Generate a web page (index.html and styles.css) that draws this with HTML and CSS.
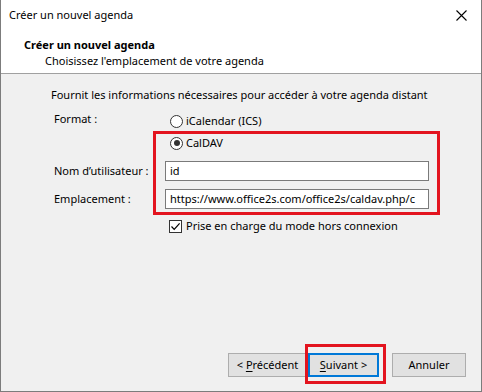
FILE: index.html
```html
<!DOCTYPE html>
<html lang="fr">
<head>
<meta charset="utf-8">
<title>Créer un nouvel agenda</title>
<link rel="stylesheet" href="styles.css">
</head>
<body>
<div class="window">
  <div class="titlebar">
    <span class="title">Créer un nouvel agenda</span>
    <svg class="close" width="11" height="11" viewBox="0 0 11 11"><path d="M0.5 0.5 L10.5 10.5 M10.5 0.5 L0.5 10.5" stroke="#000" stroke-width="1.1" fill="none"/></svg>
  </div>
  <div class="header">
    <div class="h-title">Créer un nouvel agenda</div>
    <div class="h-sub">Choisissez l'emplacement de votre agenda</div>
  </div>
  <div class="body">
    <div class="intro">Fournit les informations nécessaires pour accéder à votre agenda distant</div>
    <div class="form">
      <div class="highlight"></div>
      <div class="label l-format">Format :</div>
      <div class="choice"><span class="radio"></span><span>iCalendar (ICS)</span></div>
      <div class="label"></div>
      <div class="choice"><span class="radio checked"></span><span>CalDAV</span></div>
      <div class="label l-field">Nom d’utilisateur :</div>
      <div class="field"><div class="input">id</div></div>
      <div class="label l-field">Emplacement :</div>
      <div class="field"><div class="input">https://www.office2s.com/office2s/caldav.php/c</div></div>
      <div class="label"></div>
      <div class="check-row"><span class="checkbox"><svg width="11" height="11" viewBox="0 0 11 11"><path d="M1.5 5.5 L4.2 8.3 L9.6 2.4" stroke="#000" stroke-width="1.2" fill="none"/></svg></span><span>Prise en charge du mode hors connexion</span></div>
    </div>
    <div class="spacer"></div>
    <div class="buttons">
      <div class="btn prev"><span>&lt; <u>P</u>récédent</span></div>
      <div class="btn next default"><span><u>S</u>uivant &gt;</span><div class="btn-highlight"></div></div>
      <div class="btn cancel"><span>Annuler</span></div>
    </div>
  </div>
</div>
</body>
</html>
```

FILE: styles.css
```css
* { box-sizing: border-box; }
html, body { margin: 0; padding: 0; }
body {
  font-family: "Noto Sans", "Open Sans", sans-serif;
  font-size: 11px;
  color: #000;
  background: #f0f0f0;
}
.window {
  width: 482px;
  height: 392px;
  display: flex;
  flex-direction: column;
  border-left: 1px solid #7c7c7c;
  border-right: 1px solid #7c7c7c;
  border-bottom: 1px solid #7c7c7c;
  background: #f0f0f0;
}
.titlebar {
  height: 30px;
  background: #fff;
  display: flex;
  align-items: center;
  justify-content: space-between;
  padding: 0 14px 0 8px;
}
.title { line-height: 16px; }
.close { display: block; }
.header {
  height: 44px;
  background: #fff;
  border-bottom: 1px solid #a0a0a0;
  padding: 7px 0 0 23px;
}
.h-title { font-weight: bold; line-height: 16px; }
.h-sub { line-height: 16px; padding-left: 21px; }
.body {
  flex: 1;
  display: flex;
  flex-direction: column;
  padding: 13px 15px 14px 50px;
}
.intro { line-height: 16px; }
.form {
  position: relative;
  margin-top: 7px;
  margin-left: 3px;
  display: grid;
  grid-template-columns: 111px 264px;
  grid-template-rows: 22px 22px 28px 28px 28px;
}
.label { line-height: 16px; white-space: nowrap; }
.l-format { padding-top: 1px; }
.l-field { padding-top: 9px; }
.choice {
  display: flex;
  align-items: center;
  gap: 3px;
  padding-left: 5px;
  line-height: 16px;
}
.radio {
  width: 13px;
  height: 13px;
  border: 1px solid #333;
  border-radius: 50%;
  background: #fff;
  position: relative;
  flex: none;
}
.radio.checked::after {
  content: "";
  position: absolute;
  left: 2.5px;
  top: 2.5px;
  width: 6px;
  height: 6px;
  border-radius: 50%;
  background: #333;
}
.field { padding-top: 7px; }
.input {
  height: 20px;
  border: 1px solid #7a7a7a;
  background: #fff;
  line-height: 18px;
  padding-left: 4px;
  white-space: nowrap;
  overflow: hidden;
}
.check-row {
  display: flex;
  align-items: center;
  gap: 4px;
  padding-left: 4px;
  padding-top: 2px;
  height: 30px;
  line-height: 16px;
}
.checkbox {
  width: 13px;
  height: 13px;
  border: 1px solid #333;
  background: #fff;
  display: flex;
  align-items: center;
  justify-content: center;
  flex: none;
}
.checkbox svg { display: block; }
.highlight {
  position: absolute;
  left: 99px;
  top: 21px;
  width: 287px;
  height: 84px;
  border: 3px solid #e3141f;
  pointer-events: none;
}
.spacer { flex: 1; }
.buttons {
  display: flex;
  justify-content: flex-end;
  height: 24px;
}
.btn {
  position: relative;
  height: 24px;
  background: #e1e1e1;
  border: 1px solid #adadad;
  display: flex;
  align-items: center;
  justify-content: center;
  line-height: 16px;
  white-space: pre;
}
.btn u { text-decoration: underline; text-underline-offset: 2px; }
.prev { width: 79px; }
.next { width: 71px; margin-left: 1px; }
.cancel { width: 74px; margin-left: 13px; }
.default {
  border: 1px solid #0078d7;
  box-shadow: inset 0 0 0 1px #0078d7;
}
.btn-highlight {
  position: absolute;
  left: -4px;
  top: -10px;
  width: 81px;
  height: 40px;
  border: 3px solid #e3141f;
}
```
